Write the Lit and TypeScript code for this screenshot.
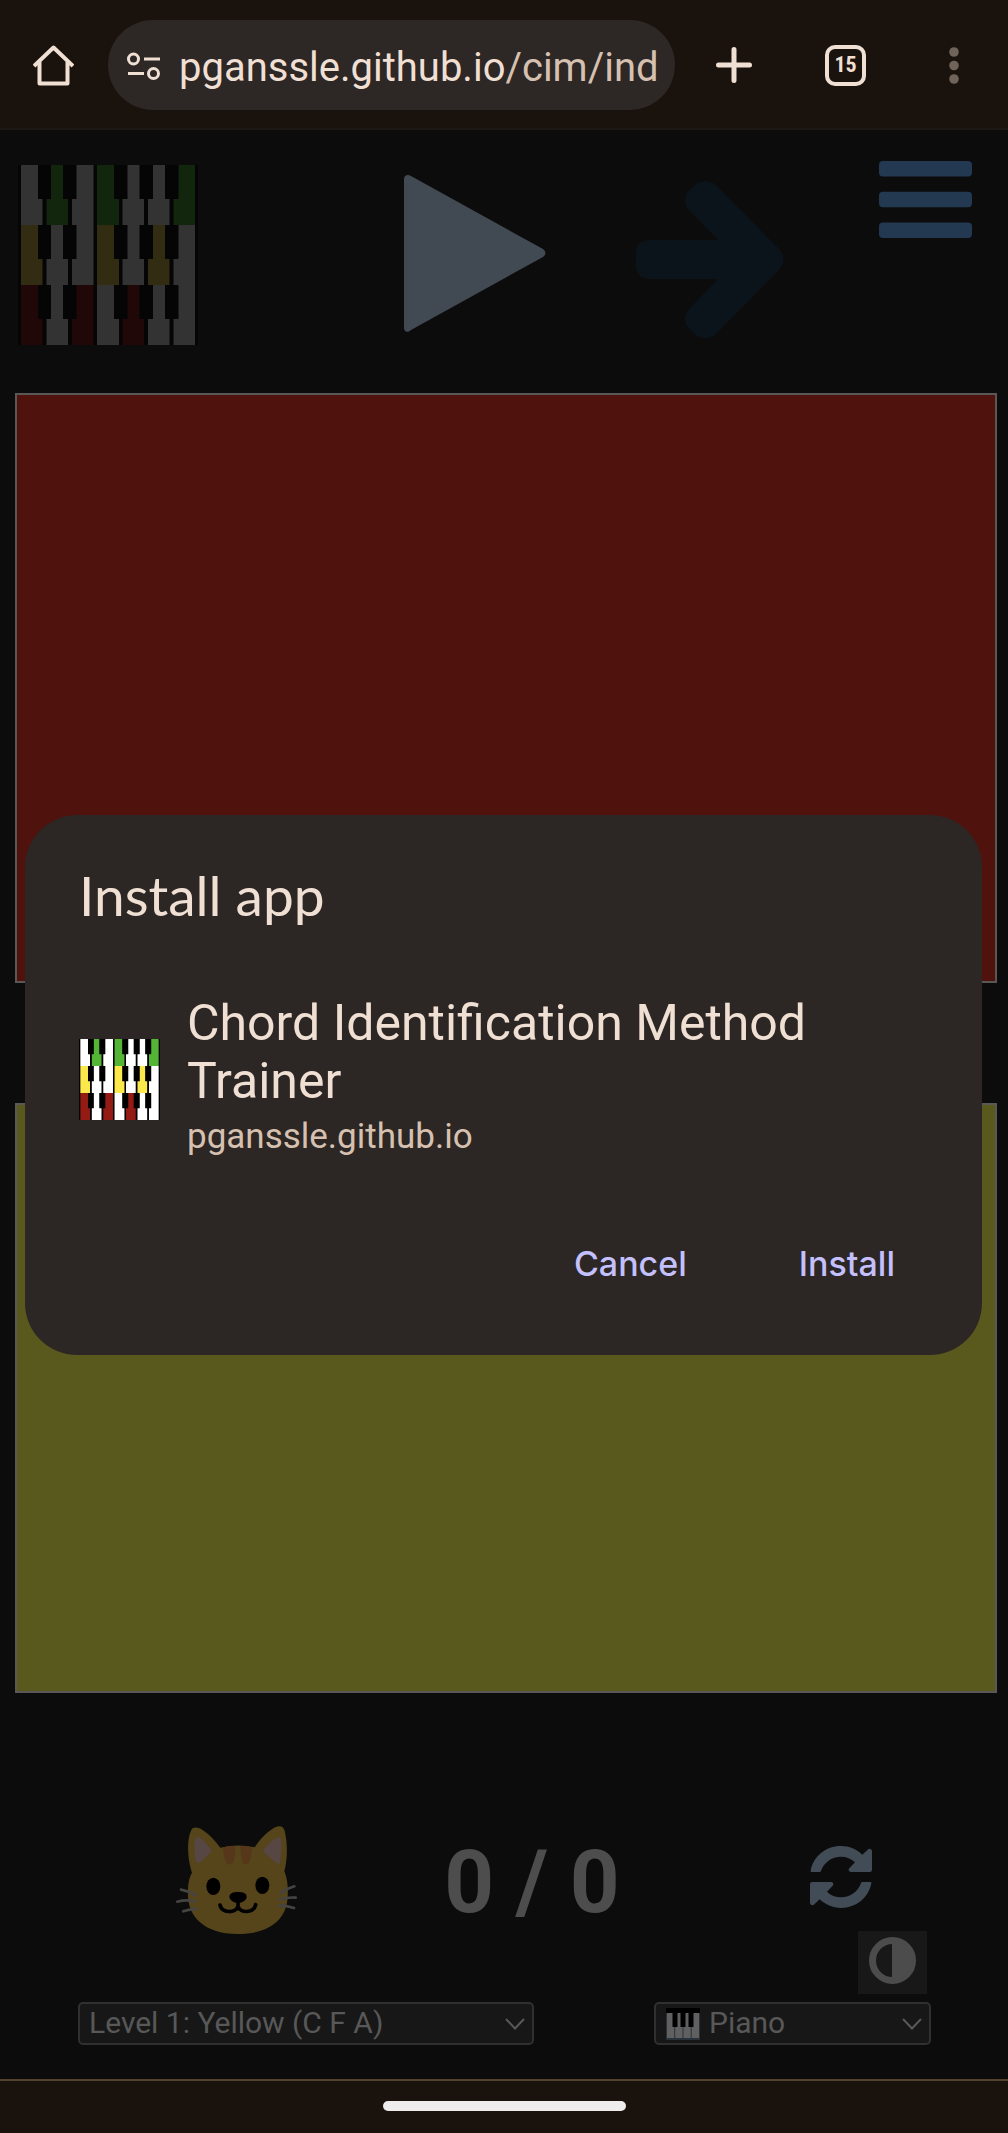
import { LitElement, html, css, svg } from "lit";
import { customElement, property } from "lit/decorators.js";

type Shade = "w" | "g" | "y" | "r";

const ROWS: Shade[][] = [
  ["w", "g", "w", "g", "w", "w", "g"],
  ["y", "w", "w", "y", "w", "y", "w"],
  ["r", "w", "r", "w", "r", "w", "w"],
];

/* One octave of white keys inside a 180x60 row. */
const KEYS = [
  "M3 0H20V34H24.500V60H3Z",
  "M33 0H45V34H50V60H28.500V34H33Z",
  "M58.500 0H75.500V60H54V34H58.500Z",
  "M79 0H96V34H101V60H79Z",
  "M109.500 0H121.500V34H126V60H104.500V34H109.500Z",
  "M135 0H147V34H151.500V60H130V34H135Z",
  "M160.500 0H177V60H155.500V34H160.500Z",
];

@customElement("chord-logo")
export class ChordLogo extends LitElement {
  @property({ type: Boolean, reflect: true }) dim = false;

  static styles = css`
    :host { display: block; --k: #000; --w: #fff; --g: #54b435; --y: #fbe84a; --r: #931b14; }
    :host([dim]) { --k: #050505; --w: #333; --g: #12250d; --y: #322d12; --r: #200708; }
    svg { display: block; width: 100%; height: auto; }
    .k { fill: var(--k); }
    .w { fill: var(--w); }
    .g { fill: var(--g); }
    .y { fill: var(--y); }
    .r { fill: var(--r); }
  `;

  render() {
    return html`<svg viewBox="0 0 180 180" aria-hidden="true">
      <rect class="k" width="180" height="180" />
      ${ROWS.map((row, i) => svg`<g transform=${`translate(0 ${i * 60})`}>
        ${row.map((shade, j) => svg`<path class=${shade} d=${KEYS[j]} />`)}
      </g>`)}
    </svg>`;
  }
}

@customElement("browser-bar")
export class BrowserBar extends LitElement {
  static styles = css`
    :host { display: block; background: #1a120c; border-bottom: 2px solid #1b1816; }
    .bar { display: flex; align-items: center; padding: 20px 24px 18px 24px; }
    button { font: inherit; color: inherit; background: none; border: 0; padding: 0; cursor: pointer; }
    svg { display: block; }
    .home { padding: 0 10px 0 9px; }
    .box {
      flex: 1; min-width: 0; box-sizing: border-box; display: flex; align-items: center; gap: 18px; height: 90px;
      margin-left: 24px; padding: 2px 18px 0; border-radius: 45px; background: #2d2725; overflow: hidden;
    }
    .url {
      flex: 1; min-width: 0; overflow: hidden; white-space: nowrap; text-align: left;
      padding: 4px 0 0; font: 40px/60px Roboto, sans-serif; color: #f0dfd3;
    }
    .path { color: #d6c1b0; }
    .plus { margin-left: 41px; }
    .tabs {
      box-sizing: border-box; width: 41px; height: 41px; margin: 0 83px 0 73px;
      border: 4px solid #f0dfd3; border-radius: 10px; color: #f0dfd3;
      font: 700 22px/32px "Roboto Condensed", Roboto, sans-serif; text-align: center;
    }
    .more { padding-right: 25px; }
  `;

  render() {
    return html`<nav class="bar" aria-label="Browser">
      <button class="home" aria-label="Home">
        <svg width="41" height="41" viewBox="0 0 41 41" fill="none" stroke="#f0dfd3" stroke-width="4" stroke-linejoin="round">
          <path d="M1 21 20.500 2.500 40 21" /><path d="M6.500 17V38.500H34.500V17" />
        </svg>
      </button>
      <div class="box">
        <button aria-label="Site information">
          <svg width="35" height="29" viewBox="0 0 35 29" fill="none" stroke="#f0dfd3" stroke-width="3">
            <circle cx="7.500" cy="7" r="5" /><circle cx="27.500" cy="21.500" r="5" />
            <path d="M18 7H34M2 21.500H18" />
          </svg>
        </button>
        <button class="url"><span>pganssle.github.io</span><span class="path">/cim/ind</span></button>
      </div>
      <button class="plus" aria-label="New tab">
        <svg width="36" height="36" viewBox="0 0 36 36" stroke="#f0dfd3" stroke-width="5" stroke-linecap="round">
          <path d="M18 2.500V33.500M2.500 18H33.500" />
        </svg>
      </button>
      <button class="tabs" aria-label="15 open tabs">15</button>
      <button class="more" aria-label="More options">
        <svg width="10" height="37" viewBox="0 0 10 37" fill="#6f635a">
          <circle cx="5" cy="5" r="4.800" /><circle cx="5" cy="18.500" r="4.800" /><circle cx="5" cy="32" r="4.800" />
        </svg>
      </button>
    </nav>`;
  }
}

@customElement("install-dialog")
export class InstallDialog extends LitElement {
  static styles = css`
    :host {
      display: block; box-sizing: border-box; padding: 48px 55px 51px 54px; border-radius: 52px;
      background: #2c2624; color: #f0dfd3; font-family: Roboto, sans-serif;
    }
    h2 { margin: 0; font: 400 55px/64px Lato, sans-serif; }
    .app { display: flex; align-items: center; gap: 27px; margin-top: 67px; }
    chord-logo { flex: none; width: 81px; }
    .name { margin: 0; font-size: 50px; line-height: 58px; }
    .host { margin: 0; font-size: 35px; line-height: 54px; color: #d6c1b0; }
    .actions { display: flex; justify-content: flex-end; gap: 48px; margin-top: 60px; }
    button {
      border: 0; background: none; padding: 0 32px; height: 80px; cursor: pointer;
      font: 500 34px/80px Inter, sans-serif; color: #c3c0fd;
    }
  `;

  render() {
    return html`
      <h2>Install app</h2>
      <div class="app">
        <chord-logo></chord-logo>
        <div>
          <p class="name">Chord Identification Method Trainer</p>
          <p class="host">pganssle.github.io</p>
        </div>
      </div>
      <div class="actions">
        <button>Cancel</button>
        <button>Install</button>
      </div>`;
  }
}

@customElement("app-root")
export class AppRoot extends LitElement {
  static styles = css`
    :host {
      display: flex; flex-direction: column; position: relative; min-height: 100vh;
      background: #0c0c0c; font-family: Roboto, sans-serif;
    }
    button { font: inherit; color: inherit; background: none; border: 0; padding: 0; cursor: pointer; }
    svg { display: block; }
    main { flex: 1; display: flex; flex-direction: column; }
    .tools {
      display: grid; grid-template-columns: 339fr 235fr 235fr 145fr; align-items: center;
      justify-items: center; padding: 31px 36px 48px 18px;
    }
    .logo { justify-self: start; width: 180px; padding-top: 4px; }
    .next { padding-top: 13px; }
    .menu { justify-self: end; align-self: start; }
    .chords { display: flex; flex-direction: column; gap: 120px; padding: 0 11px 0 15px; }
    .chord { box-sizing: border-box; width: 100%; height: 590px; border: 2px solid #5a5757; }
    .red { background: #50120d; }
    .yellow { background: #59591d; }
    .score {
      display: grid; grid-template-columns: 294fr 298fr 320fr; align-items: center;
      justify-items: center; height: 105px; margin-top: 133px; padding: 0 7px 0 89px;
    }
    .count { padding-top: 3px; font-size: 87px; line-height: 104px; font-weight: 700; color: #4d4d4d; }
    .reset { padding-bottom: 6px; }
    .theme { display: flex; justify-content: flex-end; padding-right: 81px; }
    .theme button { padding: 6px 11px 10px; background: #181818; }
    .options { display: grid; grid-template-columns: 456fr 277fr; gap: 120px; padding: 8px 77px 34px 78px; }
    .pick { display: grid; align-items: center; }
    .pick > * { grid-area: 1 / 1; }
    .pick svg { pointer-events: none; }
    .chev { justify-self: end; margin-right: 9px; }
    .keys { margin-left: 12px; }
    select {
      appearance: none; box-sizing: border-box; width: 100%; height: 43px; margin: 0; padding: 0 36px 2px 9px;
      border: 2px solid #303030; border-radius: 5px; background: #171717; color: #585858;
      font: 30px/37px Roboto, sans-serif;
    }
    .instrument { padding-left: 53px; }
    .gesture { display: flex; justify-content: center; padding: 20px 0 22px; border-top: 2px solid #524030; background: #1a120c; }
    .gesture span { width: 243px; height: 10px; border-radius: 5px; background: #eeecec; }
    install-dialog { position: absolute; top: 815px; left: 25px; right: 26px; }
  `;

  private chevron() {
    return html`<svg class="chev" width="20" height="12" viewBox="0 0 20 12" fill="none" stroke="#585858" stroke-width="2">
      <path d="M1 1 10 10.500 19 1" />
    </svg>`;
  }

  private cat() {
    return html`<svg width="121" height="108" viewBox="80 78 363 324" role="img" aria-label="Cat">
      <path fill="#56451a" d="M126 90C133 78 148 82 163 92C182 105 199 124 213 143Q265 131 316 142C330 121 350 98 373 84C389 76 401 76 406 92C414 124 416 174 405 214C413 234 417 257 415 292C412 350 371 402 266 402C160 402 119 346 116 291C115 257 118 235 128 218C117 187 109 124 126 90Z" />
      <path fill="#564745" d="M136 125C137 110 145 107 156 116Q172 129 187 152Q166 176 151 188C143 193 139 184 137 169Q134 147 136 125ZM341 151Q362 126 382 113C391 109 395 113 396 126Q397 159 392 186C390 195 385 192 377 185Q354 170 341 151Z" />
      <path fill="#56371a" d="M221 142Q240 138 258 138Q259 161 254 181C250 197 233 198 228 183Q221 161 221 142ZM273 138Q294 138 309 142Q308 161 301 183C296 198 281 197 278 181Q272 161 273 138Z" />
      <ellipse cx="192" cy="259" rx="21" ry="26" /><ellipse cx="339" cy="256" rx="21" ry="26" />
      <path d="M240 290C241 280 251 276 266 276C282 276 291 280 292 290C292 300 278 309 266 309C254 309 241 300 240 290Z" />
      <path fill="none" stroke="#000" stroke-width="11" stroke-linecap="round" stroke-linejoin="round" d="M212 315C218 341 259 340 266 319C273 340 312 341 319 314M266 304V320" />
      <path fill="none" stroke="#454442" stroke-width="8" stroke-linecap="round" d="M95 269Q117 273 139 285M84 305Q110 298 136 304M102 334Q121 328 141 326M394 279Q412 266 435 259M392 298Q416 291 439 293M389 317Q412 317 434 324" />
    </svg>`;
  }

  render() {
    const turn = "M127 213Q124 213 125 209C133 166 170 135 216 135C241 135 263 145 280 161L296 146C301 141 309 144 309 151V206Q309 213 302 213H246C239 213 237 206 241 202L258 184C247 173 232 167 216 167C188 167 164 185 156 210Q155 213 152 213Z";
    return html`
      <browser-bar></browser-bar>
      <main>
        <div class="tools">
          <chord-logo class="logo" dim></chord-logo>
          <button aria-label="Play">
            <svg width="142" height="157" viewBox="0 0 142 157">
              <path fill="#414952" d="M0 4C0 0 4-1 7 1L139 74Q144 78 139 82L7 155C4 158 0 157 0 153Z" />
            </svg>
          </button>
          <button class="next" aria-label="Next">
            <svg width="148" height="157" viewBox="0 0 148 157">
              <path fill="#0c141b" d="M14 59H82L52 28C48 22 48 16 52 11L60 3C66-1 74-1 80 4L144 69Q151 78 144 88L80 153C74 158 66 158 60 154L52 146C48 141 48 135 52 129L82 98H14Q0 98 0 84V73Q0 59 14 59Z" />
            </svg>
          </button>
          <button class="menu" aria-label="Menu">
            <svg width="93" height="77" viewBox="0 0 93 77" fill="#233851">
              <rect width="93" height="15.500" rx="4" /><rect y="30.700" width="93" height="15.500" rx="4" /><rect y="61.500" width="93" height="15.500" rx="4" />
            </svg>
          </button>
        </div>
        <div class="chords">
          <button class="chord red" aria-label="Red chord"></button>
          <button class="chord yellow" aria-label="Yellow chord"></button>
        </div>
        <div class="score">
          ${this.cat()}
          <span class="count">0 / 0</span>
          <button class="reset" aria-label="Reset score">
            <svg width="62" height="62" viewBox="123 135 186 186" fill="#414c57">
              <path d=${turn} /><path d=${turn} transform="rotate(180 216 228)" />
            </svg>
          </button>
        </div>
        <div class="theme">
          <button aria-label="Toggle contrast">
            <svg width="47" height="47" viewBox="0 0 47 47">
              <circle cx="23.500" cy="23.500" r="20" fill="none" stroke="#4c4c4c" stroke-width="7" />
              <path fill="#4c4c4c" d="M23 4H24A19.500 19.500 0 0 1 24 43H23Z" />
            </svg>
          </button>
        </div>
        <div class="options">
          <div class="pick">
            <select aria-label="Level"><option>Level 1: Yellow (C F A)</option></select>
            ${this.chevron()}
          </div>
          <div class="pick">
            <select class="instrument" aria-label="Instrument"><option>Piano</option></select>
            <svg class="keys" width="34" height="34" viewBox="0 0 34 34">
              <rect y="1" width="34" height="32" rx="1" fill="#29323a" />
              <path fill="#606060" d="M1 6H8.200V31H1ZM9.200 6H16.500V31H9.200ZM17.500 6H24.700V31H17.500ZM25.700 6H33V31H25.700Z" />
              <path d="M0 1H34V6H27.500V20H22.500V6H19.500V20H14.500V6H11.500V20H6.500V6H0Z" />
            </svg>
            ${this.chevron()}
          </div>
        </div>
      </main>
      <div class="gesture"><span></span></div>
      <install-dialog role="dialog" aria-label="Install app"></install-dialog>`;
  }
}
